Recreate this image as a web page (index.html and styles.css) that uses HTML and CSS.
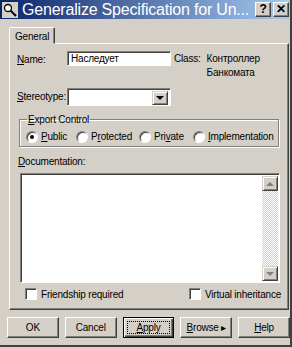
FILE: index.html
```html
<!DOCTYPE html>
<html lang="en">
<head>
  <meta charset="UTF-8">
  <title>Generalize Specification</title>
  <link rel="stylesheet" href="styles.css">
</head>
<body>
  <div class="window">
    <div class="titlebar">
      <span class="title-icon">
        <svg width="16" height="16" viewBox="0 0 16 16">
          <rect x="0" y="0" width="16" height="16" fill="#d4d0c8"/>
          <circle cx="6" cy="6" r="3.5" fill="#fff" stroke="#000" stroke-width="1.3"/>
          <line x1="8.6" y1="8.6" x2="14" y2="14" stroke="#000" stroke-width="2"/>
        </svg>
      </span>
      <span class="title-text">Generalize Specification for Un...</span>
      <div class="title-buttons">
        <span class="tbtn">?</span>
        <span class="tbtn">&#x2715;</span>
      </div>
    </div>

    <div class="content">
      <div class="tabs">
        <div class="tab">General</div>
      </div>
      <div class="panel">
        <div class="row">
          <label class="lbl"><u>N</u>ame:</label>
          <div class="field">Наследует</div>
          <div class="class-info">
            <span>Class:</span>
            <span class="class-name">Контроллер<br>Банкомата</span>
          </div>
        </div>
        <div class="row row-stereo">
          <label class="lbl"><u>S</u>tereotype:</label>
          <div class="combo">
            <span class="combo-btn"><span class="arrow-down"></span></span>
          </div>
        </div>

        <fieldset class="group">
          <legend><u>E</u>xport Control</legend>
          <label class="radio-item r-public"><span class="radio checked"></span><u>P</u>ublic</label>
          <label class="radio-item r-protected"><span class="radio"></span>P<u>r</u>otected</label>
          <label class="radio-item r-private"><span class="radio"></span>Pri<u>v</u>ate</label>
          <label class="radio-item"><span class="radio"></span><u>I</u>mplementation</label>
        </fieldset>

        <div class="doc-label"><u>D</u>ocumentation:</div>
        <div class="doc">
          <div class="scrollbar">
            <span class="sbtn"><span class="tri-up"></span></span>
            <span class="track"></span>
            <span class="sbtn"><span class="tri-down"></span></span>
          </div>
        </div>

        <div class="checks">
          <label class="check-item c-friend"><span class="check"></span>Friendship required</label>
          <label class="check-item"><span class="check"></span>Virtual inheritance</label>
        </div>
      </div>

      <div class="buttons">
        <button class="btn">OK</button>
        <button class="btn">Cancel</button>
        <button class="btn default"><span class="focus"><u>A</u>pply</span></button>
        <button class="btn"><u>B</u>rowse &#x25B8;</button>
        <button class="btn"><u>H</u>elp</button>
      </div>
    </div>
  </div>
</body>
</html>
```

FILE: styles.css
```css
body {
  margin: 0;
  background: #d4d0c8;
}
.window {
  width: 292px;
  height: 347px;
  box-sizing: border-box;
  background: #d4d0c8;
  border-right: 2px solid #404040;
  border-bottom: 2px solid #404040;
  font-family: 'Liberation Sans', Arial, sans-serif;
  font-size: 10px;
  letter-spacing: -0.2px;
  color: #000;
  overflow: hidden;
}
.titlebar {
  height: 19px;
  display: flex;
  align-items: center;
  background: linear-gradient(to right, #0a246a, #a6caf0);
}
.title-icon {
  flex: none;
  width: 16px;
  height: 16px;
  margin: 0 4px 0 2px;
  display: flex;
}
.title-text {
  flex: 1;
  min-width: 0;
  overflow: hidden;
  color: #fff;
  font-size: 16px;
  letter-spacing: -0.2px;
  white-space: nowrap;
  line-height: 19px;
}
.title-buttons {
  flex: none;
  margin-right: 1px;
  display: flex;
  gap: 2px;
}
.tbtn {
  width: 16px;
  height: 15px;
  box-sizing: border-box;
  background: #d4d0c8;
  border: 1px solid;
  border-color: #fff #404040 #404040 #fff;
  box-shadow: inset -1px -1px 0 #808080;
  font-size: 12px;
  font-weight: bold;
  line-height: 13px;
  text-align: center;
}
.content {
  padding: 8px 0 0 9px;
}
.tabs {
  display: flex;
  height: 16px;
}
.tab {
  width: 46px;
  box-sizing: border-box;
  border: 1px solid;
  border-color: #fff #404040 transparent #fff;
  box-shadow: inset -1px 0 0 #808080;
  border-radius: 2px 2px 0 0;
  padding: 3px 0 0 5px;
  position: relative;
  z-index: 1;
  background: #d4d0c8;
  height: 17px;
}
.panel {
  width: 280px;
  height: 267px;
  box-sizing: border-box;
  border: 1px solid;
  border-color: #fff #404040 #404040 #fff;
  box-shadow: inset -1px -1px 0 #808080;
  padding: 7px 0 0 7px;
}
.row {
  display: flex;
  align-items: flex-start;
}
.lbl {
  width: 50px;
  padding-top: 3px;
}
.field, .combo {
  width: 104px;
  box-sizing: border-box;
  background: #fff;
  border: 1px solid;
  border-color: #808080 #fff #fff #808080;
  box-shadow: inset 1px 1px 0 #404040;
  padding: 1px 3px;
  height: 15px;
  line-height: 12px;
}
.class-info {
  display: flex;
  gap: 6px;
  margin-left: 3px;
  line-height: 14px;
  padding-top: 1px;
}
.row-stereo {
  margin-top: 8px;
}
.combo {
  height: 18px;
  padding: 2px;
  display: flex;
  justify-content: flex-end;
}
.combo-btn, .sbtn {
  width: 16px;
  height: 14px;
  box-sizing: border-box;
  background: #d4d0c8;
  border: 1px solid;
  border-color: #d4d0c8 #404040 #404040 #d4d0c8;
  box-shadow: inset 1px 1px 0 #fff, inset -1px -1px 0 #808080;
  display: flex;
  align-items: center;
  justify-content: center;
}
.arrow-down {
  border-left: 4px solid transparent;
  border-right: 4px solid transparent;
  border-top: 4px solid #000;
}
.group {
  margin: 8px 0 0 2px;
  width: 260px;
  box-sizing: border-box;
  height: 33px;
  padding: 2px 0 0 6px;
  border: 1px solid #808080;
  box-shadow: 1px 1px 0 #fff, inset 1px 1px 0 #fff;
  display: flex;
  align-items: center;
}
.group legend {
  padding: 0 1px;
  margin-left: 1px;
  line-height: 11px;
}
.radio-item {
  display: flex;
  align-items: center;
  white-space: nowrap;
}
.r-public {
  width: 50px;
}
.r-protected {
  width: 63px;
}
.r-private {
  width: 54px;
}
.radio {
  flex: none;
  width: 12px;
  height: 12px;
  box-sizing: border-box;
  border-radius: 50%;
  background: #fff;
  border: 1px solid;
  border-color: #808080 #fff #fff #808080;
  box-shadow: inset 1px 1px 0 #404040;
  margin-right: 3px;
  display: flex;
  align-items: center;
  justify-content: center;
}
.radio.checked::after {
  content: "";
  width: 4px;
  height: 4px;
  border-radius: 50%;
  background: #000;
}
.doc-label {
  margin: 9px 0 0 1px;
  height: 14px;
}
.doc {
  margin: 3px 0 0 3px;
  width: 260px;
  height: 110px;
  box-sizing: border-box;
  background: #fff;
  border: 1px solid;
  border-color: #808080 #fff #fff #808080;
  box-shadow: inset 1px 1px 0 #404040;
  display: flex;
  justify-content: flex-end;
  padding: 2px 1px 1px 2px;
}
.scrollbar {
  width: 16px;
  display: flex;
  flex-direction: column;
}
.sbtn {
  height: 15px;
}
.track {
  flex: 1;
  background: repeating-conic-gradient(#fff 0 25%, #d4d0c8 0 50%) 0 0 / 2px 2px;
}
.tri-up {
  border-left: 4px solid transparent;
  border-right: 4px solid transparent;
  border-bottom: 4px solid #808080;
}
.tri-down {
  border-left: 4px solid transparent;
  border-right: 4px solid transparent;
  border-top: 4px solid #808080;
}
.checks {
  display: flex;
  margin: 5px 0 0 8px;
}
.check-item {
  display: flex;
  align-items: center;
  white-space: nowrap;
}
.c-friend {
  width: 164px;
}
.check {
  flex: none;
  width: 12px;
  height: 12px;
  box-sizing: border-box;
  background: #fff;
  border: 1px solid;
  border-color: #808080 #fff #fff #808080;
  box-shadow: inset 1px 1px 0 #404040;
  margin-right: 4px;
}
.buttons {
  display: flex;
  gap: 6px;
  margin: 7px 0 0 -2px;
}
.btn {
  width: 52px;
  height: 21px;
  box-sizing: border-box;
  background: #d4d0c8;
  border: 1px solid;
  border-color: #fff #404040 #404040 #fff;
  box-shadow: inset -1px -1px 0 #808080;
  font-family: 'Liberation Sans', Arial, sans-serif;
  font-size: 10px;
  letter-spacing: -0.2px;
  color: #000;
  padding: 0;
}
.btn.default {
  border: 1px solid #000;
  box-shadow: inset 1px 1px 0 #fff, inset -1px -1px 0 #404040, inset -2px -2px 0 #808080;
  padding: 3px;
}
.focus {
  display: block;
  border: 1px dotted #000;
  height: 11px;
  line-height: 11px;
}
```
